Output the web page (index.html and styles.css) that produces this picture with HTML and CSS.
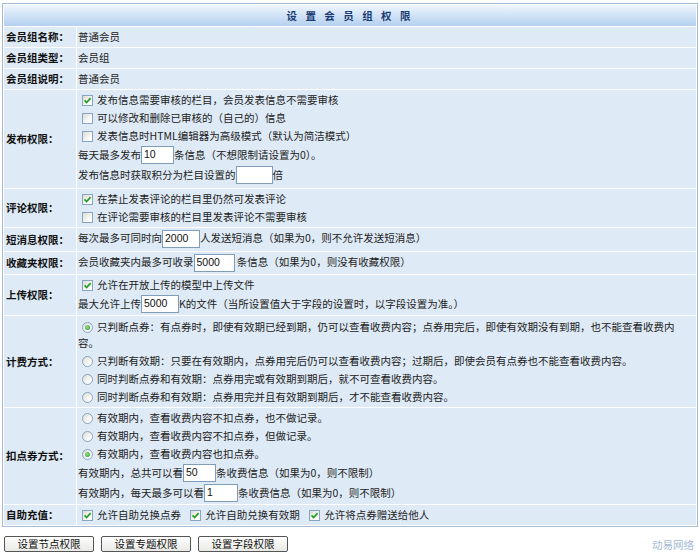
FILE: index.html
```html
<!DOCTYPE html>
<html lang="zh-CN">
<head>
    <meta charset="UTF-8">
    <title>设置会员组权限</title>
    <link rel="stylesheet" href="styles.css">
</head>
<body>
    <table class="perm">
        <tr><th colspan="2" class="title">设 置 会 员 组 权 限</th></tr>
        <tr>
            <td class="label">会员组名称：</td>
            <td class="val">普通会员</td>
        </tr>
        <tr>
            <td class="label">会员组类型：</td>
            <td class="val">会员组</td>
        </tr>
        <tr>
            <td class="label">会员组说明：</td>
            <td class="val">普通会员</td>
        </tr>
        <tr>
            <td class="label">发布权限：</td>
            <td class="val multi tall">
                <div class="line"><i class="chk on"><svg viewBox="0 0 9 9"><path d="M1.6 4.4 L3.6 6.5 L7.6 2.2"/></svg></i>发布信息需要审核的栏目，会员发表信息不需要审核</div>
                <div class="line"><i class="chk"></i>可以修改和删除已审核的（自己的）信息</div>
                <div class="line"><i class="chk"></i>发表信息时HTML编辑器为高级模式（默认为简洁模式）</div>
                <div class="line">每天最多发布<input type="text" class="num w33" value="10">条信息（不想限制请设置为0）。</div>
                <div class="line">发布信息时获取积分为栏目设置的<input type="text" class="num w37" value="">倍</div>
            </td>
        </tr>
        <tr>
            <td class="label">评论权限：</td>
            <td class="val multi">
                <div class="line"><i class="chk on"><svg viewBox="0 0 9 9"><path d="M1.6 4.4 L3.6 6.5 L7.6 2.2"/></svg></i>在禁止发表评论的栏目里仍然可发表评论</div>
                <div class="line"><i class="chk"></i>在评论需要审核的栏目里发表评论不需要审核</div>
            </td>
        </tr>
        <tr>
            <td class="label">短消息权限：</td>
            <td class="val inp">每次最多可同时向<input type="text" class="num w38" value="2000">人发送短消息（如果为0，则不允许发送短消息）</td>
        </tr>
        <tr>
            <td class="label">收藏夹权限：</td>
            <td class="val">会员收藏夹内最多可收录<input type="text" class="num w41" value="5000"> 条信息（如果为0，则没有收藏权限）</td>
        </tr>
        <tr>
            <td class="label">上传权限：</td>
            <td class="val multi">
                <div class="line"><i class="chk on"><svg viewBox="0 0 9 9"><path d="M1.6 4.4 L3.6 6.5 L7.6 2.2"/></svg></i>允许在开放上传的模型中上传文件</div>
                <div class="line">最大允许上传<input type="text" class="num w38" value="5000"> K的文件（当所设置值大于字段的设置时，以字段设置为准。）</div>
            </td>
        </tr>
        <tr>
            <td class="label">计费方式：</td>
            <td class="val multi top">
                <div class="line"><i class="rad on"></i>只判断点券：有点券时，即使有效期已经到期，仍可以查看收费内容；点券用完后，即使有效期没有到期，也不能查看收费内容。</div>
                <div class="line"><i class="rad"></i>只判断有效期：只要在有效期内，点券用完后仍可以查看收费内容；过期后，即使会员有点券也不能查看收费内容。</div>
                <div class="line"><i class="rad"></i>同时判断点券和有效期：点券用完或有效期到期后，就不可查看收费内容。</div>
                <div class="line"><i class="rad"></i>同时判断点券和有效期：点券用完并且有效期到期后，才不能查看收费内容。</div>
            </td>
        </tr>
        <tr>
            <td class="label">扣点券方式：</td>
            <td class="val multi">
                <div class="line"><i class="rad"></i>有效期内，查看收费内容不扣点券，也不做记录。</div>
                <div class="line"><i class="rad"></i>有效期内，查看收费内容不扣点券，但做记录。</div>
                <div class="line"><i class="rad on"></i>有效期内，查看收费内容也扣点券。</div>
                <div class="line">有效期内，总共可以看<input type="text" class="num w33" value="50">条收费信息（如果为0，则不限制）</div>
                <div class="line">有效期内，每天最多可以看<input type="text" class="num w34" value="1">条收费信息（如果为0，则不限制）</div>
            </td>
        </tr>
        <tr>
            <td class="label">自助充值：</td>
            <td class="val">
                <i class="chk on"><svg viewBox="0 0 9 9"><path d="M1.6 4.4 L3.6 6.5 L7.6 2.2"/></svg></i>允许自助兑换点券
                <i class="chk on next"><svg viewBox="0 0 9 9"><path d="M1.6 4.4 L3.6 6.5 L7.6 2.2"/></svg></i>允许自助兑换有效期
                <i class="chk on next"><svg viewBox="0 0 9 9"><path d="M1.6 4.4 L3.6 6.5 L7.6 2.2"/></svg></i>允许将点券赠送给他人
            </td>
        </tr>
    </table>

    <div class="foot">
        <div class="btns">
            <button type="button">设置节点权限</button>
            <button type="button">设置专题权限</button>
            <button type="button">设置字段权限</button>
        </div>
        <span class="brand">动易网络</span>
    </div>
</body>
</html>
```

FILE: styles.css
```css
body {
    margin: 0;
    padding: 3px 2px 0;
    font-family: "Noto Sans CJK SC", "Liberation Sans", sans-serif;
    font-size: 10.5px;
    color: #222;
    background: #fff;
}

.perm {
    width: 696px;
    border: 1px solid #a6bcd5;
    border-spacing: 1px;
    background: #fff;
}

.perm th,
.perm td {
    background: #deeaf6;
    padding: 1px 0;
    line-height: 18px;
    text-align: left;
}

.perm th.title {
    height: 21px;
    padding: 0;
    text-align: center;
    background: linear-gradient(#eef5fd, #b4d0ef);
    color: #1c3d74;
    letter-spacing: 3px;
    font-weight: bold;
}

.label {
    width: 70px;
    padding-left: 2px !important;
    font-weight: bold;
    color: #111;
    white-space: nowrap;
}

.val {
    padding-left: 1px !important;
    padding-right: 6px !important;
}

.val.tall {
    padding-bottom: 3px;
}

.val.inp {
    padding-bottom: 2px;
}

.val.top {
    padding-top: 2px;
}

.line {
    line-height: 16px;
    min-height: 18px;
    display: flex;
    align-items: center;
    flex-wrap: wrap;
}

.line:has(.rad),
.line:has(.chk) {
    display: block;
    padding: 1px 0;
    min-height: 16px;
}

/* checkbox and radio boxes */
.chk,
.rad {
    display: inline-block;
    box-sizing: border-box;
    width: 11px;
    height: 11px;
    margin: 0 4px 0 4px;
    border: 1px solid #87a4c0;
    background: linear-gradient(135deg, #dcdcd6, #fff 80%);
    vertical-align: -2px;
    position: relative;
}

.chk.next {
    margin-left: 7px;
}

.chk svg {
    position: absolute;
    left: 0;
    top: 0;
    width: 9px;
    height: 9px;
    fill: none;
    stroke: #21a121;
    stroke-width: 1.7;
}

.rad {
    border-radius: 50%;
}

.rad.on::after {
    content: "";
    position: absolute;
    left: 2px;
    top: 2px;
    width: 5px;
    height: 5px;
    border-radius: 50%;
    background: radial-gradient(circle at 40% 40%, #8ee08a, #2c9a2c);
}

.num {
    box-sizing: border-box;
    height: 18px;
    margin: 1px 0;
    padding: 0 2px 3px;
    border: 1px solid #7f9db9;
    background: #fff;
    font-family: "Liberation Sans", sans-serif;
    font-size: 10.5px;
    color: #111;
    vertical-align: middle;
}

.w33 { width: 33px; }
.w34 { width: 34px; }
.w37 { width: 37px; }
.w38 { width: 38px; }
.w41 { width: 41px; }

.foot {
    display: flex;
    justify-content: space-between;
    align-items: center;
    margin-top: 9px;
    padding: 0 4px 0 2px;
}

.btns {
    display: flex;
    gap: 7px;
}

.btns button {
    width: 90px;
    height: 16px;
    padding: 0;
    border: 1px solid #555;
    border-radius: 2px;
    background: linear-gradient(#fff, #e8e8e4);
    font-family: "Noto Sans CJK SC", sans-serif;
    font-size: 10.5px;
    color: #111;
    line-height: 14px;
}

.brand {
    color: #a3b9d3;
}
```
